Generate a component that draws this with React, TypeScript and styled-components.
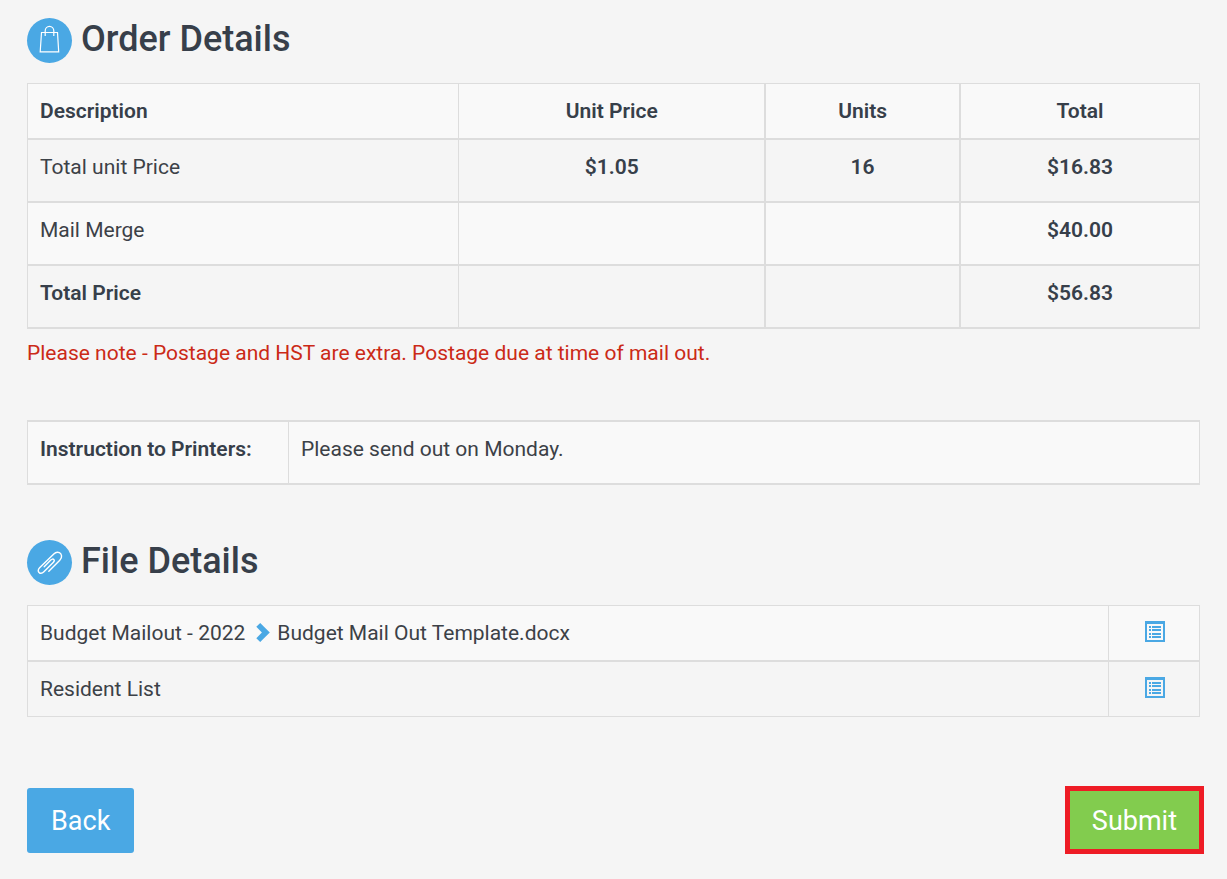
import React from 'react';
import styled, { createGlobalStyle } from 'styled-components';

const BLUE = '#4aa8e4';
const INK = '#373f4a';
const LINE = '#dddddd';

const GlobalStyle = createGlobalStyle`
  * { box-sizing: border-box; }
  body {
    margin: 0;
    background: #f5f5f5;
    color: #3c4147;
    font-family: Roboto, "Liberation Sans", sans-serif;
    font-size: 21px;
    line-height: 28px;
  }
`;

const Page = styled.main`
  padding: 16px 27px 25px;
`;

const Heading = styled.h1`
  display: flex;
  align-items: center;
  gap: 9px;
  margin: 0 0 20px;
  color: ${INK};
  font-size: 36px;
  font-weight: 500;
  line-height: 47px;
`;

const Badge = styled.span`
  display: flex;
  width: 45px;
  height: 45px;
  margin-top: 2px;
  border-radius: 50%;
  background: ${BLUE};
`;

const Table = styled.table<{ $top?: number }>`
  width: 100%;
  table-layout: fixed;
  border-collapse: separate;
  border-spacing: 0;
  border: solid ${LINE};
  border-width: ${(p) => p.$top ?? 1}px 0 0 1px;

  tr:nth-child(odd) { background: #f9f9f9; }
  tr:nth-child(even) { background: #f5f5f5; }
`;

const Col = styled.col<{ $width?: string }>`
  width: ${(p) => p.$width ?? 'auto'};
`;

type CellProps = { $center?: boolean; $strong?: boolean; $tall?: boolean; $right?: number; $bottom?: number };

const Cell = styled.td<CellProps>`
  padding: 13px 12px ${(p) => (p.$tall ? 20 : 13)}px;
  border: solid ${LINE};
  border-width: 0 ${(p) => p.$right ?? 1}px ${(p) => p.$bottom ?? 2}px 0;
  color: ${(p) => (p.$strong ? INK : 'inherit')};
  font-weight: ${(p) => (p.$strong ? 600 : 400)};
  text-align: ${(p) => (p.$center ? 'center' : 'left')};
  vertical-align: top;
`;

const Note = styled.p`
  margin: 10px 0 53px;
  color: #cb2a17;
`;

const Section = styled.section`
  margin-top: 53px;
`;

const IconLink = styled.a`
  display: flex;
  justify-content: center;
  padding: 2px 0 0 1px;
  color: ${BLUE};
`;

const Chevron = styled.svg`
  margin: 0 7px 0 11px;
  vertical-align: -2px;
`;

const Actions = styled.div`
  display: flex;
  justify-content: space-between;
  align-items: center;
  margin: 69px -4px 0 0;
`;

const Button = styled.button<{ $submit?: boolean }>`
  height: ${(p) => (p.$submit ? 68 : 65)}px;
  padding: 2px ${(p) => (p.$submit ? 22 : 24)}px 0;
  border: ${(p) => (p.$submit ? '5px solid #ee1c25' : '0')};
  border-radius: ${(p) => (p.$submit ? 0 : 3)}px;
  background: ${(p) => (p.$submit ? '#82cc4e' : BLUE)};
  color: #fff;
  font-family: inherit;
  font-size: 27px;
  line-height: 36px;
  cursor: pointer;
`;

const BagIcon = () => (
  <svg width="45" height="45" viewBox="0 0 45 45" fill="none" stroke="#fff" strokeWidth="1.2" aria-hidden="true">
    <path d="M14.5 14.5h16l1.2 19.3H13.2z" />
    <path d="M18.2 18v-5.2a4.3 4.5 0 0 1 8.6 0V18" />
  </svg>
);

const ClipIcon = () => (
  <svg width="45" height="45" viewBox="0 0 45 45" fill="none" stroke="#fff" strokeWidth="1.4" strokeLinecap="round" strokeLinejoin="round" aria-hidden="true">
    <path d="M21.8 31.2l11-11c3-3 1.800-6.400-.4-7.500-2-1-4.100-.3-5.600 1.200L12.600 27.800c-1.600 1.600-1.800 3.400-.6 4.600 1.300 1.300 3.300 1 4.900-.6l9.300-9.300c1.200-1.200 1.300-2.300.6-3-.8-.8-1.900-.5-3 .6l-6.600 6.600" />
  </svg>
);

const ListIcon = () => (
  <svg width="20" height="21" viewBox="0 0 20 21" fill="currentColor" aria-hidden="true">
    <path fillRule="evenodd" d="M0 0h20v21H0zM2 3v16h16V3z" />
    <path d="M4 5h2v2H4zM4 8h2v2H4zM4 12h2v2H4zM4 15h2v2H4zM7 5h9v2H7zM7 8h9v2H7zM7 12h9v2H7zM7 15h9v2H7z" />
  </svg>
);

const orderRows = [
  { label: 'Total unit Price', price: '$1.05', units: '16', total: '$16.83' },
  { label: 'Mail Merge', price: '', units: '', total: '$40.00' },
  { label: 'Total Price', price: '', units: '', total: '$56.83', strong: true },
];

export default function App() {
  return (
    <>
      <GlobalStyle />
      <Page>
        <Heading>
          <Badge><BagIcon /></Badge>
          Order Details
        </Heading>
        <Table>
          <colgroup>
            <Col $width="36.8%" />
            <Col $width="26.2%" />
            <Col $width="16.6%" />
            <Col />
          </colgroup>
          <tbody>
            <tr>
              <Cell as="th" scope="col" $strong>Description</Cell>
              <Cell as="th" scope="col" $strong $center $right={2}>Unit Price</Cell>
              <Cell as="th" scope="col" $strong $center $right={2}>Units</Cell>
              <Cell as="th" scope="col" $strong $center>Total</Cell>
            </tr>
            {orderRows.map((row) => (
              <tr key={row.label}>
                <Cell $tall $strong={row.strong}>{row.label}</Cell>
                <Cell $tall $strong $center $right={2}>{row.price}</Cell>
                <Cell $tall $strong $center $right={2}>{row.units}</Cell>
                <Cell $tall $strong $center>{row.total}</Cell>
              </tr>
            ))}
          </tbody>
        </Table>
        <Note>Please note - Postage and HST are extra. Postage due at time of mail out.</Note>
        <Table $top={2}>
          <colgroup>
            <Col $width="261px" />
            <Col />
          </colgroup>
          <tbody>
            <tr>
              <Cell as="th" scope="row" $tall $strong>Instruction to Printers:</Cell>
              <Cell $tall>Please send out on Monday.</Cell>
            </tr>
          </tbody>
        </Table>
        <Section>
          <Heading as="h2">
            <Badge><ClipIcon /></Badge>
            File Details
          </Heading>
          <Table>
            <colgroup>
              <Col />
              <Col $width="91px" />
            </colgroup>
            <tbody>
              <tr>
                <Cell>
                  Budget Mailout - 2022
                  <Chevron width="14" height="19" viewBox="0 0 14 19" fill={BLUE} aria-hidden="true">
                    <path d="M4.200 0l9.600 9.500L4.200 19 .3 15.200 5.900 9.500 .3 3.800z" />
                  </Chevron>
                  Budget Mail Out Template.docx
                </Cell>
                <Cell><IconLink href="#template" aria-label="View template"><ListIcon /></IconLink></Cell>
              </tr>
              <tr>
                <Cell $bottom={1}>Resident List</Cell>
                <Cell $bottom={1}><IconLink href="#residents" aria-label="View resident list"><ListIcon /></IconLink></Cell>
              </tr>
            </tbody>
          </Table>
        </Section>
        <Actions>
          <Button type="button">Back</Button>
          <Button type="submit" $submit>Submit</Button>
        </Actions>
      </Page>
    </>
  );
}
